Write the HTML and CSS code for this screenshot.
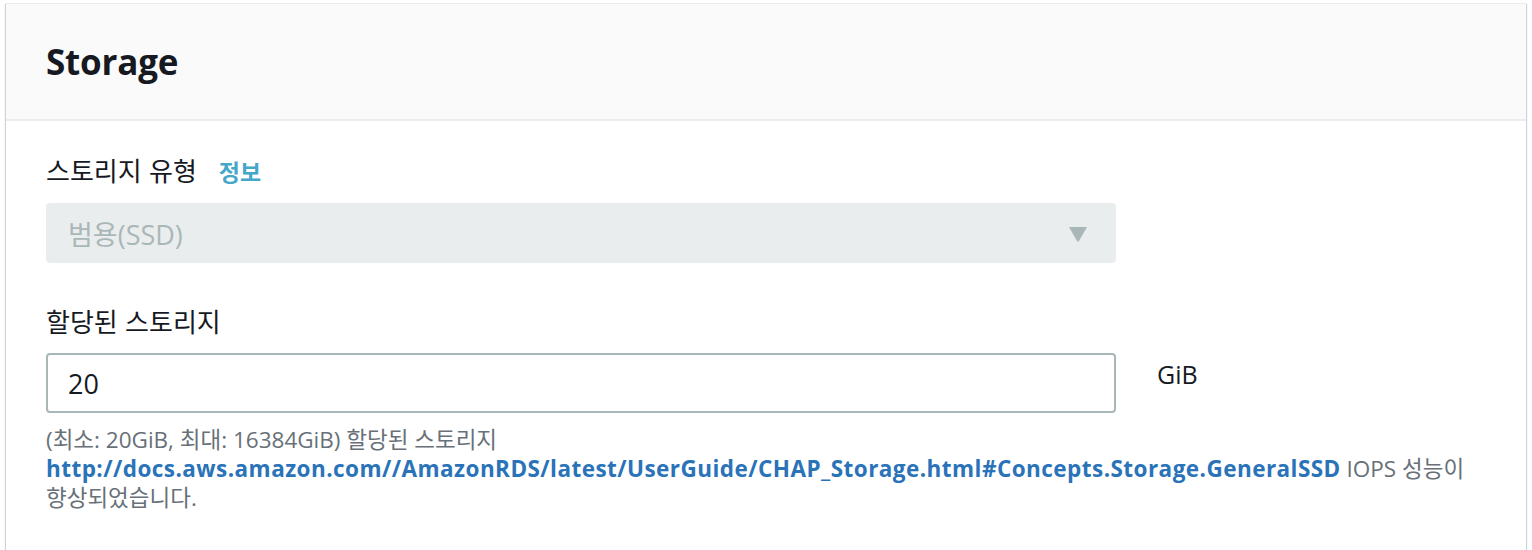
FILE: index.html
```html
<!DOCTYPE html>
<html lang="ko">
<head>
<meta charset="utf-8">
<link rel="stylesheet" href="styles.css">
</head>
<body>
<section class="card">
  <header class="card-header">
    <h2 class="title">Storage</h2>
  </header>
  <div class="card-body">
    <div class="field">
      <div class="label">스토리지 유형<a class="info">정보</a></div>
      <div class="select">
        <span class="select-value">범용(SSD)</span>
        <svg class="caret" width="20" height="16" viewBox="0 0 20 16"><path d="M1 1 L19 1 L11 15 Q10 16.5 9 15 Z" fill="#aab7b8"/></svg>
      </div>
    </div>
    <div class="field">
      <div class="label">할당된 스토리지</div>
      <div class="input-row">
        <div class="input">20</div>
        <span class="unit">GiB</span>
      </div>
      <p class="desc">(최소: 20GiB, 최대: 16384GiB) 할당된 스토리지 <a class="link">http://docs.aws.amazon.com//AmazonRDS/latest/UserGuide/CHAP_Storage.html#Concepts.Storage.GeneralSSD</a> IOPS 성능이 향상되었습니다.</p>
    </div>
  </div>
</section>
</body>
</html>
```
FILE: styles.css
```css
html, body {
  margin: 0;
  padding: 0;
  background: #ffffff;
}
body {
  padding: 3px 6px 0 6px;
  font-family: "Open Sans", "Noto Sans CJK KR", sans-serif;
  color: #16191f;
}
.card {
  background: #ffffff;
  box-shadow: 0 1px 1px 0 rgba(0, 28, 36, 0.3), 1px 1px 1px 0 rgba(0, 28, 36, 0.15), -1px 1px 1px 0 rgba(0, 28, 36, 0.15);
  border-top: 1px solid #eaeded;
  height: 600px;
}
.card-header {
  background: #fafafa;
  border-bottom: 2px solid #eaeded;
  height: 115px;
  padding: 0 40px;
  display: flex;
  align-items: center;
}
.title {
  margin: 0;
  font-family: "Open Sans", sans-serif;
  font-weight: 700;
  font-size: 35px;
  color: #16191f;
  letter-spacing: -0.2px;
}
.card-body {
  padding: 33px 40px 0 40px;
}
.field {
  margin-bottom: 42px;
}
.label {
  font-family: "Noto Sans CJK KR", "Open Sans", sans-serif;
  font-size: 26px;
  line-height: 32px;
  color: #16191f;
  margin-bottom: 16px;
}
.info {
  font-weight: 700;
  font-size: 23px;
  color: #44a6c8;
  margin-left: 22px;
}
.select {
  width: 1070px;
  height: 60px;
  box-sizing: border-box;
  background: #eaeded;
  border-radius: 4px;
  display: flex;
  align-items: center;
  justify-content: space-between;
  padding: 0 28px 0 22px;
}
.select-value {
  font-family: "Open Sans", "Noto Sans CJK KR", sans-serif;
  font-size: 27px;
  color: #aab7b8;
}
.caret {
  display: block;
  margin-top: 2px;
}
.input-row {
  display: flex;
  align-items: flex-start;
}
.input {
  width: 1070px;
  height: 60px;
  box-sizing: border-box;
  border: 2px solid #aab7b8;
  border-radius: 4px;
  padding: 0 20px;
  display: flex;
  align-items: center;
  font-size: 27px;
  color: #16191f;
}
.unit {
  margin-left: 41px;
  font-size: 25px;
  line-height: 42px;
  color: #16191f;
}
.desc {
  margin: 12px 0 0 0;
  font-family: "Open Sans", "Noto Sans CJK KR", sans-serif;
  font-size: 22.5px;
  line-height: 29px;
  color: #687078;
  word-break: keep-all;
}
.link {
  font-weight: 700;
  color: #2a73b9;
  letter-spacing: 0.45px;
}
```
